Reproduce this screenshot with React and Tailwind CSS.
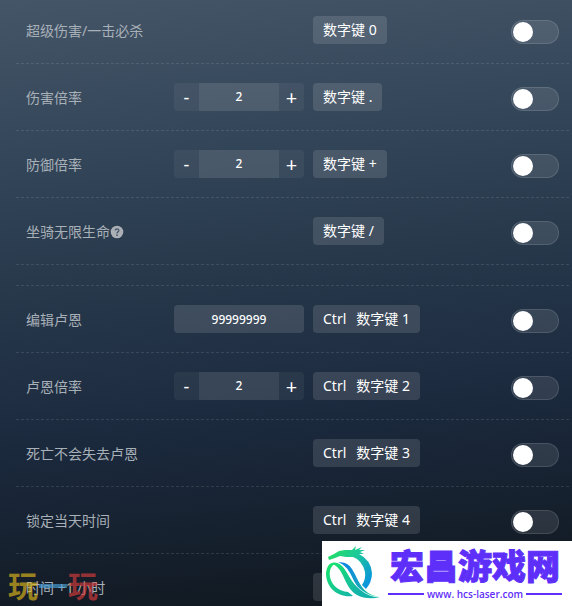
import React from "react";

const combat = [
  { id: "kill", label: "超级伤害/一击必杀", keys: ["数字键 0"] },
  { id: "damage", label: "伤害倍率", stepper: 2, keys: ["数字键 ."] },
  { id: "defense", label: "防御倍率", stepper: 2, keys: ["数字键 +"] },
  { id: "mount", label: "坐骑无限生命", help: true, keys: ["数字键 /"] },
];

const runes = [
  { id: "runes", label: "编辑卢恩", value: 99999999, keys: ["Ctrl", "数字键 1"] },
  { id: "rate", label: "卢恩倍率", stepper: 2, keys: ["Ctrl", "数字键 2"] },
  { id: "keep", label: "死亡不会失去卢恩", keys: ["Ctrl", "数字键 3"] },
  { id: "lock", label: "锁定当天时间", keys: ["Ctrl", "数字键 4"] },
  { id: "hour", label: "时间 +1 小时", keys: [], action: true },
];

function Help() {
  return (
    <svg viewBox="0 0 14 14" className="h-3.5 w-3.5" aria-hidden="true">
      <circle cx="7" cy="7" r="6.3" fill="#abb0b6" />
      <path d="M5.2 5.6C5.2 3.4 8.8 3.4 8.8 5.5C8.8 7 7 6.8 7 8.4" fill="none" stroke="#4a5a6c" strokeWidth="1.4" />
      <circle cx="7" cy="10.2" r="0.9" fill="#4a5a6c" />
    </svg>
  );
}

function Stepper({ id, value }) {
  return (
    <div className="flex h-7 w-[130px] overflow-hidden rounded bg-white/5 text-white">
      <button type="button" className="w-[25px] text-lg leading-6">-</button>
      <input
        id={id}
        defaultValue={value}
        className="w-20 bg-white/7 text-center text-xs font-medium outline-none"
      />
      <button type="button" className="w-[25px] pt-0.5 text-xl leading-6">+</button>
    </div>
  );
}

function Row({ row }) {
  return (
    <div className="flex h-[67px] items-center border-b border-transparent bg-[repeating-linear-gradient(90deg,#ffffff1c_0_3px,transparent_3px_5px)] bg-[length:100%_1px] bg-bottom bg-no-repeat bg-origin-border pr-[11px] pl-2.5">
      <label htmlFor={row.id} className="flex w-[148px] shrink-0 items-center pt-0.5 text-sm whitespace-nowrap text-[#a8b0b8]">
        {row.label}
        {row.help && <Help />}
      </label>
      <div className="mr-[9px] w-[130px] shrink-0">
        {row.stepper && <Stepper id={row.id} value={row.stepper} />}
        {row.value && (
          <input
            id={row.id}
            defaultValue={row.value}
            className="block h-7 w-full rounded bg-white/12 text-center text-xs font-medium text-white outline-none"
          />
        )}
      </div>
      <button
        type="button"
        id={row.action ? row.id : undefined}
        className="flex h-7 min-w-16 items-center gap-2.5 rounded bg-white/12 px-2.5 text-sm whitespace-nowrap text-white"
      >
        {row.keys.map((k) => (
          <span key={k}>{k}</span>
        ))}
      </button>
      {!row.action && (
        <input
          type="checkbox"
          id={row.stepper || row.value ? undefined : row.id}
          aria-label={row.label}
          className="mt-1 ml-auto flex h-6 w-12 shrink-0 appearance-none items-center rounded-full border border-white/12 bg-white/10 px-px before:h-5 before:w-5 before:rounded-full before:bg-white checked:justify-end"
        />
      )}
    </div>
  );
}

function Dragon() {
  return (
    <svg viewBox="0 0 56 54" className="h-[54px] w-14 shrink-0" aria-hidden="true">
      <defs>
        <linearGradient id="body" gradientUnits="userSpaceOnUse" x1="4" y1="8" x2="44" y2="42">
          <stop offset="0" stopColor="#22dc68" />
          <stop offset="0.4" stopColor="#1cc99a" />
          <stop offset="0.7" stopColor="#12a8c0" />
          <stop offset="1" stopColor="#078ee8" />
        </linearGradient>
        <linearGradient id="ribbon" gradientUnits="userSpaceOnUse" x1="2" y1="18" x2="28" y2="50">
          <stop offset="0" stopColor="#18e46c" />
          <stop offset="1" stopColor="#14b3aa" />
        </linearGradient>
        <linearGradient id="stripe" gradientUnits="userSpaceOnUse" x1="18" y1="16" x2="46" y2="50">
          <stop offset="0" stopColor="#0c86e0" />
          <stop offset="0.5" stopColor="#1299cc" />
          <stop offset="1" stopColor="#19c99a" />
        </linearGradient>
      </defs>
      <path
        d="M2 11L8 8L13 5L19 4L26 4L30 0L29 4L36 1L33 4L39 4L34 6L38 8L33 8Q45 14 46 27Q46 36 40 43L36 39Q40 33 39 26Q36 14 27 11L20 11L14 10L9 12L3 14Z"
        fill="url(#body)"
      />
      <path d="M0 27C1 19 5 15 11 17C5 19 3 24 4 31C6 40 13 45 22 46L27 50C12 52 0 42 0 27Z" fill="url(#ribbon)" />
      <path d="M6 18Q10 15 15 19C24 26 25 47 54 51.500Q40 54 31 49C18 42 18 21 6 18Z" fill="url(#ribbon)" />
      <path d="M12 16.500Q21 15 26 23C34 36 35 48 54 51Q41 51 34 44C26 36 25 20 12 16.500Z" fill="url(#stripe)" />
      <path d="M12 16.700C25 22 25 48 53 51.300" fill="none" stroke="#fff" strokeWidth="0.7" />
    </svg>
  );
}

export default function App() {
  return (
    <main className="relative h-screen overflow-hidden bg-[linear-gradient(174deg,#455568_0%,#35475a_22%,#28394c_43%,#1b293d_68%,#16212f_83%,#0f151b_100%)] font-['Noto_Sans','Noto_Sans_CJK_SC',sans-serif]">
      <div className="-mt-[3px] mr-0.5 ml-4 flex flex-col gap-5">
        <section>
          {combat.map((row) => (
            <Row key={row.id} row={row} />
          ))}
        </section>
        <section>
          <div className="h-px bg-[repeating-linear-gradient(90deg,#ffffff1c_0_3px,transparent_3px_5px)]" />
          {runes.map((row) => (
            <Row key={row.id} row={row} />
          ))}
        </section>
      </div>

      <div className="pointer-events-none absolute bottom-1 left-2 flex text-3xl leading-8 font-bold opacity-65">
        <span className="text-[#e0b81c]">玩</span>
        <span className="text-[#4da3dc]">一</span>
        <span className="text-[#d83c3c]">玩</span>
      </div>

      <a href="#top" className="absolute right-0 bottom-0 flex h-[65px] w-[250px] items-start bg-white pt-[5px] pl-1 text-[#5f2ffa]">
        <Dragon />
        <span className="ml-1.5 flex w-[174px] flex-col items-center">
          <span className="text-[34px] leading-10 font-black whitespace-nowrap [-webkit-text-stroke:1px_#5f2ffa]">宏昌游戏网</span>
          <span className="flex w-full items-center gap-[3px] font-['Open_Sans',sans-serif] text-[10px] leading-4 font-semibold whitespace-nowrap">
            <span className="h-0.5 flex-1 bg-[#5f2ffa]" />
            www. hcs-laser.com
            <span className="h-0.5 flex-1 bg-[#5f2ffa]" />
          </span>
        </span>
      </a>
    </main>
  );
}
